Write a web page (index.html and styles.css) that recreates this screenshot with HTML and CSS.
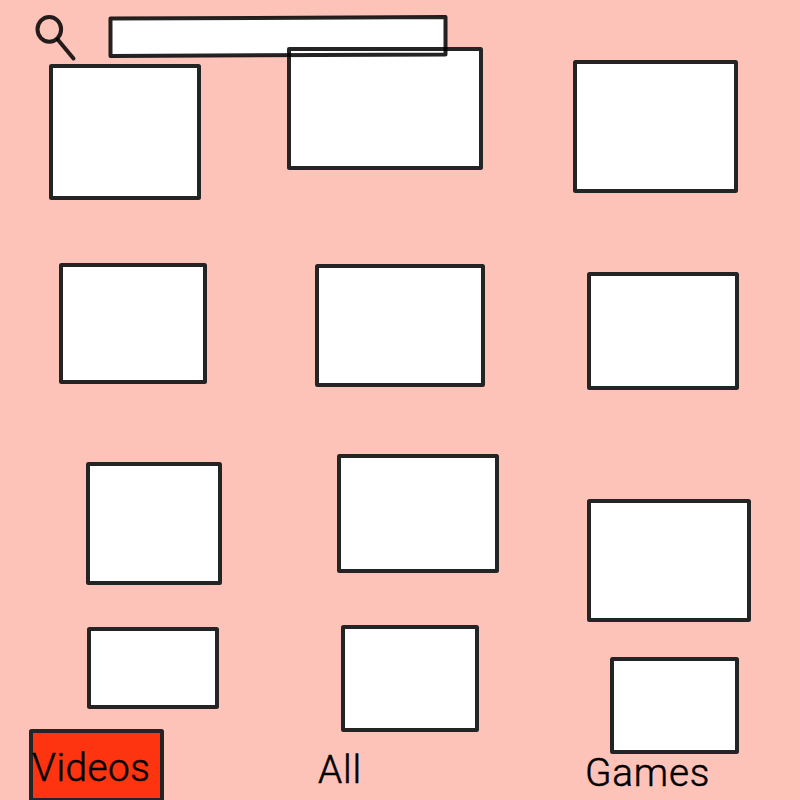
FILE: index.html
```html
<!DOCTYPE html>
<html lang="en">
<head>
<meta charset="utf-8">
<title>Browse</title>
<link rel="stylesheet" href="styles.css">
</head>
<body>
<header class="search">
  <svg class="search-art" width="460" height="62" viewBox="0 0 460 62" aria-hidden="true">
    <g fill="none" stroke="#000" stroke-opacity=".86" stroke-width="4" stroke-linejoin="round" stroke-linecap="round">
      <ellipse cx="49.3" cy="29.3" rx="11.8" ry="12.4"/>
      <path d="M57.7 39.5 73.5 58.5"/>
    </g>
    <path fill="#fff" d="M110.5 18.6 445.5 17.1V47H287V55.3L110.5 55.9Z"/>
    <path fill="none" stroke="#000" stroke-opacity=".86" stroke-width="4" stroke-linejoin="round" d="M110.5 18.6 445.5 17.1V54.6L110.5 55.9Z"/>
  </svg>
</header>
<main class="columns">
  <section class="column">
    <div class="card a1"></div>
    <div class="card b1"></div>
    <div class="card c1"></div>
    <div class="card d1"></div>
    <div class="card tab active"><span class="label">Videos</span></div>
  </section>
  <section class="column">
    <div class="card a2"></div>
    <div class="card b2"></div>
    <div class="card c2"></div>
    <div class="card d2"></div>
    <span class="label all">All</span>
  </section>
  <section class="column">
    <div class="card a3"></div>
    <div class="card b3"></div>
    <div class="card c3"></div>
    <div class="card d3"></div>
    <span class="label games">Games</span>
  </section>
</main>
</body>
</html>
```
FILE: styles.css
```css
* { box-sizing: border-box; }

body {
  margin: 0;
  height: 800px;
  overflow: hidden;
  background: #fdc3b8;
  color: #000;
  font-family: Roboto, "Liberation Sans", Arial, sans-serif;
  font-weight: 300;
}

.search {
  position: relative;
  z-index: 1;
  height: 47px;
}

.search-art {
  display: block;
  overflow: visible;
}

.columns {
  display: grid;
  grid-template-columns: 270px 290px 240px;
  height: 753px;
}

.column {
  display: flex;
  flex-direction: column;
  align-items: flex-start;
}

.card {
  flex: none;
  border: 4px solid #242424;
  border-radius: 2.5px;
  background: #fff;
}

.a1 { width: 152px; height: 135.5px; margin: 17.4px 0 0 49px; }
.b1 { width: 148px; height: 121px; margin: 63.1px 0 0 59px; }
.c1 { width: 135.6px; height: 122.6px; margin: 78px 0 0 86px; }
.d1 { width: 132px; height: 82px; margin: 42.4px 0 0 87px; }

.a2 { width: 196px; height: 123px; margin: 0 0 0 17px; }
.b2 { width: 169.6px; height: 123px; margin: 94px 0 0 45px; }
.c2 { width: 162px; height: 119px; margin: 67px 0 0 67px; }
.d2 { width: 138px; height: 107px; margin: 52px 0 0 71px; }

.a3 { width: 165px; height: 133.5px; margin: 12.5px 0 0 13.4px; }
.b3 { width: 152.3px; height: 118px; margin: 79px 0 0 27px; }
.c3 { width: 164.3px; height: 123px; margin: 109px 0 0 26.7px; }
.d3 { width: 129.2px; height: 96.6px; margin: 35px 0 0 50px; }

.tab {
  width: 135px;
  height: 72.5px;
  margin: 20.5px 0 0 29px;
}

.active { background: #fe330f; }

.label {
  flex: none;
  display: block;
  font-size: 38.7px;
  line-height: 46px;
  letter-spacing: 0.8px;
  white-space: nowrap;
  -webkit-text-stroke: 0.5px #000;
}

.tab .label {
  margin: 11.5px 0 0 -1px;
  letter-spacing: 0.5px;
}

.all { margin: 14.5px 0 0 48px; }

.games { margin: -4px 0 0 25px; }
```
